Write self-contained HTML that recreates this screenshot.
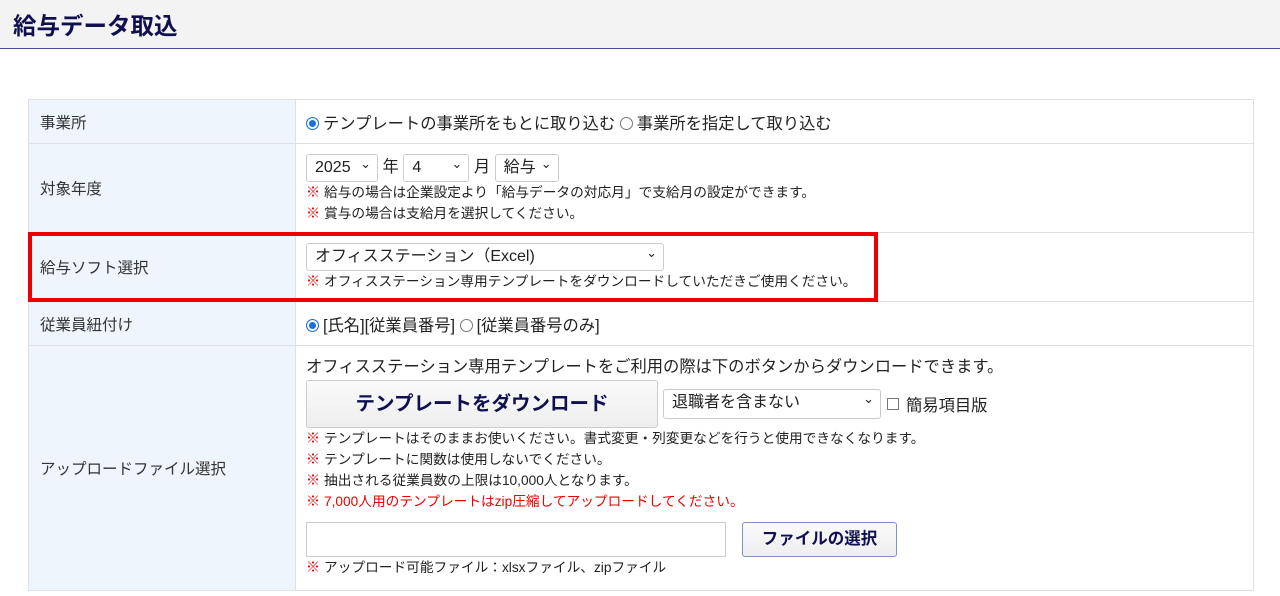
<!DOCTYPE html><html><head><meta charset="utf-8"><style>
*{box-sizing:border-box;margin:0;padding:0}
body{width:1280px;height:596px;background:#fff;font-family:"Liberation Sans","Noto Sans CJK JP",sans-serif;color:#222;position:relative;overflow:hidden}
.hd{position:absolute;left:0;top:0;width:1280px;height:49px;background:#f3f3f3;border-bottom:1.5px solid #4a4a8a}
.hd h1{position:absolute;left:13px;top:7px;font-size:23.5px;font-weight:bold;color:#101050}
table{position:absolute;left:28px;top:99px;width:1226px;border-collapse:collapse}
td{border:1.5px solid #dde0e4;font-size:16.3px;vertical-align:middle}
td.l{width:267px;background:#eef5fc;padding-left:11px;color:#333;font-size:15.5px}
td.r{padding-left:10px}
.n{font-size:13.7px;line-height:20px}
.n b{color:#e00;font-weight:bold;margin-right:4px;font-size:14px}
.rd{display:inline-block;width:13px;height:13px;border-radius:50%;border:1px solid #777;vertical-align:-1px;margin-right:4px}
.rd.on{border:1.5px solid #1a6fd8;box-shadow:inset 0 0 0 2px #fff;background:#1a6fd8}
.sel{display:inline-block;border:1px solid #ccc;border-radius:3px;height:28px;line-height:26px;padding:0 8px;font-size:16px;position:relative;background:#fff}
.sel:after{content:"⌄";position:absolute;right:6px;top:-4px;font-size:13px}
.btn{display:inline-block;border:1px solid #ccc;border-radius:3px;background:linear-gradient(#fafafa,#eee);font-weight:bold;color:#101050}
</style></head><body>
<div class="hd"><h1>給与データ取込</h1></div>
<table>
<tr style="height:44px"><td class="l">事業所</td><td class="r"><span class="rd on"></span>テンプレートの事業所をもとに取り込む <span class="rd"></span>事業所を指定して取り込む</td></tr>
<tr style="height:89px"><td class="l">対象年度</td><td class="r"><div style="margin-top:0"><span class="sel" style="width:72px">2025</span> 年 <span class="sel" style="width:66px">4</span> 月 <span class="sel" style="width:64px">給与</span></div><div class="n"><b>※</b>給与の場合は企業設定より「給与データの対応月」で支給月の設定ができます。</div><div class="n"><b>※</b>賞与の場合は支給月を選択してください。</div></td></tr>
<tr style="height:69px"><td class="l">給与ソフト選択</td><td class="r"><span class="sel" style="width:358px">オフィスステーション（Excel)</span><div class="n"><b>※</b>オフィスステーション専用テンプレートをダウンロードしていただきご使用ください。</div></td></tr>
<tr style="height:44px"><td class="l">従業員紐付け</td><td class="r"><span class="rd on"></span>[氏名][従業員番号] <span class="rd"></span>[従業員番号のみ]</td></tr>
<tr style="height:245px"><td class="l">アップロードファイル選択</td><td class="r" style="vertical-align:top;padding-top:7px">
<div>オフィスステーション専用テンプレートをご利用の際は下のボタンからダウンロードできます。</div>
<div style="margin-top:3px;display:flex;align-items:center"><span class="btn" style="width:352px;height:48px;line-height:46px;text-align:center;font-size:19.5px">テンプレートをダウンロード</span><span class="sel" style="width:218px;margin-left:5px;height:30px">退職者を含まない</span><span style="display:inline-block;width:12px;height:12px;border:1px solid #777;margin:0 7px 0 6px"></span>簡易項目版</div>
<div class="n" style="margin-top:0"><b>※</b>テンプレートはそのままお使いください。書式変更・列変更などを行うと使用できなくなります。</div>
<div class="n"><b>※</b>テンプレートに関数は使用しないでください。</div>
<div class="n"><b>※</b>抽出される従業員数の上限は10,000人となります。</div>
<div class="n" style="color:#e00"><b>※</b>7,000人用のテンプレートはzip圧縮してアップロードしてください。</div>
<div style="margin-top:10px;display:flex;align-items:center"><span style="display:inline-block;width:420px;height:35px;border:1px solid #ccc"></span><span class="btn" style="margin-left:16px;width:155px;height:35px;line-height:33px;text-align:center;font-size:16.5px;border-color:#8090c0">ファイルの選択</span></div>
<div class="n"><b>※</b>アップロード可能ファイル：xlsxファイル、zipファイル</div>
</td></tr>
</table>
<div style="position:absolute;left:28px;top:232px;width:850px;height:70px;border:4px solid #e00"></div>
</body></html>
